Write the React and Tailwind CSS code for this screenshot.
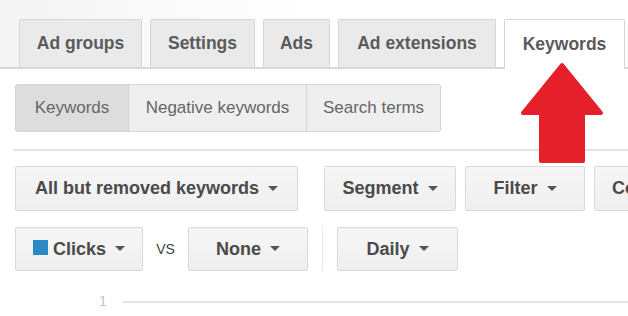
import React from 'react';

const Caret = () => (
  <svg width="10" height="6" viewBox="0 0 10 6" className="ml-[9px] shrink-0">
    <path d="M0 0 L10 0 L5 5 Z" fill="#555" />
  </svg>
);

const Btn = ({ w, children, caret = true }) => (
  <div
    className={`${w} h-full shrink-0 flex items-center justify-center rounded-[2px] border border-[#d9d9d9] bg-gradient-to-b from-[#f6f6f6] to-[#efefef] text-[18px] font-bold text-[#4a4a4a]`}
  >
    {children}
    {caret && <Caret />}
  </div>
);

const Tab = ({ w, active, children }) => (
  <div
    className={`${w} shrink-0 flex items-center justify-center border border-b-0 rounded-t-[2px] text-[17.5px] font-bold text-[#5a5a5a] ${
      active ? 'bg-white border-[#d6d6d6] h-[50px] -mb-[2px]' : 'bg-[#eaeaea] border-[#d6d6d6] h-[48px]'
    }`}
  >
    {children}
  </div>
);

export default function App() {
  return (
    <div
      className="relative w-[628px] h-[316px] overflow-hidden bg-white whitespace-nowrap"
      style={{ fontFamily: '"Liberation Sans", Arial, sans-serif' }}
    >
      {/* Top tabs */}
      <div className="pt-[19px] bg-gradient-to-r from-[#f4f4f4] via-white to-white">
        <div className="flex items-end gap-[8px] pl-[19px] border-b-2 border-[#d8d8d8] h-[50px]">
          <Tab w="w-[123px]">Ad groups</Tab>
          <Tab w="w-[105px]">Settings</Tab>
          <Tab w="w-[67px]">Ads</Tab>
          <Tab w="w-[158px]">Ad extensions</Tab>
          <Tab w="w-[121px]" active>Keywords</Tab>
        </div>
      </div>

      {/* Sub tabs */}
      <div className="bg-white pt-[15px] pl-[15px]">
        <div className="flex h-[48px] w-[426px] rounded-[2px] border border-[#d6d6d6] text-[17px] text-[#666]">
          <div className="w-[113px] flex items-center justify-center bg-[#dddddd] border-r border-[#d0d0d0]">Keywords</div>
          <div className="w-[178px] flex items-center justify-center bg-[#efefef] border-r border-[#d6d6d6]">Negative keywords</div>
          <div className="flex-1 flex items-center justify-center bg-[#efefef]">Search terms</div>
        </div>
      </div>

      {/* Separator */}
      <div className="ml-[13px] mt-[17px] h-[2px] bg-[#e2e2e2]" />

      {/* Toolbar row 1 */}
      <div className="flex items-center h-[45px] mt-[15px] pl-[15px]">
        <Btn w="w-[283px]">All but removed keywords</Btn>
        <div className="mx-[13px] w-px h-full bg-[#e8e8e8]" />
        <Btn w="w-[132px]">Segment</Btn>
        <div className="w-[9px] shrink-0" />
        <Btn w="w-[120px]">Filter</Btn>
        <div className="w-[9px] shrink-0" />
        <div className="w-[120px] h-full shrink-0 flex items-center pl-[17px] rounded-[2px] border border-[#d9d9d9] bg-gradient-to-b from-[#f6f6f6] to-[#efefef] text-[18px] font-bold text-[#4a4a4a]">
          Columns
        </div>
      </div>

      {/* Toolbar row 2 */}
      <div className="flex items-center h-[44px] mt-[16px] pl-[15px]">
        <Btn w="w-[128px]">
          <span className="w-[15px] h-[15px] bg-[#2b8ac6] mr-[5px] -mt-[3px] shrink-0" />
          Clicks
        </Btn>
        <div className="w-[45px] shrink-0 text-center text-[14px] text-[#444]">VS</div>
        <Btn w="w-[120px]">None</Btn>
        <div className="mx-[14px] w-px h-full bg-[#e8e8e8]" />
        <Btn w="w-[121px]">Daily</Btn>
      </div>

      {/* Chart axis */}
      <div className="flex items-center mt-[20px] pl-[99px]">
        <span className="text-[14px] text-[#c4c4c4] w-[24px]">1</span>
        <div className="flex-1 h-[2px] bg-[#e2e2e2]" />
      </div>

      {/* Red arrow overlay */}
      <svg
        className="absolute left-[519px] top-[61px]"
        width="86"
        height="104"
        viewBox="0 0 86 104"
      >
        <path
          d="M43 4 L82 52 L64 52 L64 100 L22 100 L22 52 L4 52 Z"
          fill="#e5202b"
          stroke="#e5202b"
          strokeWidth="4"
          strokeLinejoin="round"
        />
      </svg>
    </div>
  );
}
